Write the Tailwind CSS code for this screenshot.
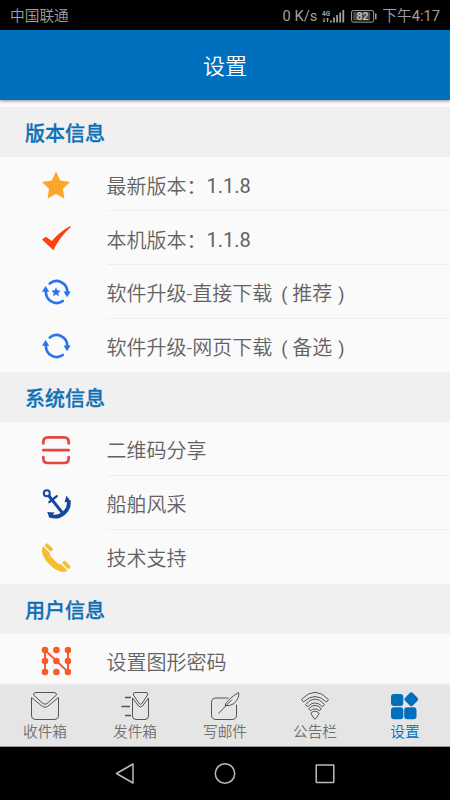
<!DOCTYPE html>
<html lang="zh-CN">
<head>
<meta charset="utf-8">
<meta name="viewport" content="width=device-width, initial-scale=1">
<title>设置</title>
<script src="https://cdn.jsdelivr.net/npm/@tailwindcss/browser@4"></script>
</head>
<body class="w-[450px] h-[800px] overflow-hidden flex flex-col bg-[#fafafa] font-['Roboto','Noto_Sans_CJK_SC',sans-serif] font-[350]">
<div class="h-[30px] shrink-0 bg-black text-[#a0a0a0] flex items-center justify-between pl-[10px] pr-[10px] text-[15px] leading-[30px] pt-[2px]">
  <span class="text-[14.7px]">中国联通</span>
  <div class="flex items-center">
    <span class="font-normal text-[14.7px] mr-[5px]">0 K/s</span>
    <svg class="mr-[6px]" width="23" height="15" viewBox="0 0 23 15" fill="#a0a0a0">
      <text x="0" y="6.500" font-size="7.500" font-weight="700" textLength="8" lengthAdjust="spacingAndGlyphs">4G</text>
      <path d="M2 9v4M1 11.500l1 1.500 1-1.500M5.500 13v-4M4.500 10.500l1-1.500 1 1.500" fill="none" stroke="#a0a0a0" stroke-width="1"/>
      <path d="M8 11.500h1.800v2H8zM11.100 8.500h1.800v5h-1.800zM14.200 6H16v7.500h-1.800zM17.300 3.500h1.800v10h-1.800zM20.400 1h1.800v12.500h-1.800z"/>
    </svg>
    <svg class="mr-[5px]" width="26" height="13" viewBox="0 0 26 13">
      <rect x=".6" y=".6" width="22" height="11.500" rx="1.500" fill="none" stroke="#a0a0a0"/>
      <rect x="2.200" y="2.200" width="17" height="8.300" fill="#4a4a4a"/>
      <rect x="24" y="3.500" width="1.500" height="6" fill="#a0a0a0"/>
      <text x="11.600" y="9.900" text-anchor="middle" font-size="10.500" font-weight="600" fill="#c4c4c4">82</text>
    </svg>
    <span class="text-[14.7px]">下午<span class="font-normal">4:17</span></span>
  </div>
</div>
<header class="h-[70px] shrink-0 bg-[#0070be] text-white text-[22px] flex items-center justify-center pt-[2px] relative shadow-[0_1px_3px_rgba(0,0,0,0.45)]">设置</header>
<main class="h-[585px] shrink-0 overflow-hidden pt-[7px] text-[20px] text-[#626262]">
  <h2 class="h-[50px] bg-[#f0f0f0] pl-[25px] pt-[4px] flex items-center font-medium text-[#0f70b5] text-[20px] [-webkit-text-stroke:0.3px_#0f70b5]">版本信息</h2>
  <div class="h-[54px] flex">
    <div class="w-[106.500px] flex items-center pl-[41px] pt-[4px]"><svg width="30" height="30" viewBox="0 0 30 30" fill="#faa629"><path d="M15 .5L19.200 9.600 29 11 21.900 17.800 23.400 27.500 15 23 6.600 27.500 8 17.800 1 11 10.800 9.600z"/></svg></div>
    <div class="flex-1 border-b border-[#eee] flex items-center pt-[6px]">最新版本：<span class="font-normal -mt-[2px]">1.1.8</span></div>
  </div>
  <div class="h-[54px] flex">
    <div class="w-[106.500px] flex items-center pl-[41px] pt-[4px]"><svg width="30" height="30" viewBox="0 0 30 30" fill="#fb4311"><path d="M1 14.500L5 11.800 10.800 16Q19 6.500 29.300 1l.4 1.300Q19 11.500 12.400 25.300z"/></svg></div>
    <div class="flex-1 border-b border-[#eee] flex items-center pt-[6px]">本机版本：<span class="font-normal -mt-[2px]">1.1.8</span></div>
  </div>
  <div class="h-[54px] flex">
    <div class="w-[106.500px] flex items-center pl-[41px]"><svg width="30" height="30" viewBox="0 0 30 30" fill="#2b73ee"><path d="M8.800 6.500A10.800 10.800 0 0 1 26.400 15M4.900 15A10.800 10.800 0 0 0 21.800 24" fill="none" stroke="#2b73ee" stroke-width="2.700" stroke-linecap="round"/><path d="M22.500 14.500h7.200l-3.600 5.800zM1 14.800h7.200L4.600 9zM15 10.400l1.400 2.900 3.200.5-2.300 2.200.6 3.200-2.900-1.600-2.900 1.600.6-3.200-2.300-2.200 3.200-.5z"/></svg></div>
    <div class="flex-1 border-b border-[#eee] flex items-center pt-[4px]"><span>软件升级-直接下载<span class="inline-block w-[20px] pl-[9px] text-[18px] font-normal leading-none">(</span>推荐<span class="inline-block w-[20px] pl-[6px] text-[18px] font-normal leading-none">)</span></span></div>
  </div>
  <div class="h-[53px] flex">
    <div class="w-[106.500px] flex items-center pl-[41px]"><svg width="30" height="30" viewBox="0 0 30 30" fill="#2b73ee"><path d="M8.800 6.500A10.800 10.800 0 0 1 26.400 15M4.900 15A10.800 10.800 0 0 0 21.800 24" fill="none" stroke="#2b73ee" stroke-width="2.700" stroke-linecap="round"/><path d="M22.500 14.500h7.200l-3.600 5.800zM1 14.800h7.200L4.600 9z"/></svg></div>
    <div class="flex-1 flex items-center pt-[5px]"><span>软件升级-网页下载<span class="inline-block w-[20px] pl-[9px] text-[18px] font-normal leading-none">(</span>备选<span class="inline-block w-[20px] pl-[6px] text-[18px] font-normal leading-none">)</span></span></div>
  </div>
  <h2 class="h-[50px] bg-[#f0f0f0] pl-[25px] pt-[4px] flex items-center font-medium text-[#0f70b5] text-[20px] [-webkit-text-stroke:0.3px_#0f70b5]">系统信息</h2>
  <div class="h-[54px] flex">
    <div class="w-[106.500px] flex items-center pl-[41px] pt-[2px]"><svg width="30" height="30" viewBox="0 0 30 30" fill="none" stroke="#e64640" stroke-width="2.700" stroke-linecap="round"><path d="M2.300 8.500V7Q2.300 2.300 7 2.300h16Q27.700 2.300 27.700 7v1.500M2.300 22v1.500Q2.300 28 7 28h16Q27.700 28 27.700 23.500V22M2.300 15.200h25.400"/></svg></div>
    <div class="flex-1 border-b border-[#eee] flex items-center pt-[5px]">二维码分享</div>
  </div>
  <div class="h-[54px] flex">
    <div class="w-[106.500px] flex items-center pl-[41px] pt-[2px]"><svg width="30" height="30" viewBox="0 0 30 30" fill="none" stroke="#16479e"><circle cx="5.800" cy="4.200" r="3" stroke-width="2"/><path d="M8 7l14 17.500" stroke-width="3"/><path d="M8.300 13.200l7.500-6" stroke-width="2.200" stroke-linecap="round"/><path d="M8.500 26.200Q16 29.800 22.500 24.500T27.600 11.500" stroke-width="3.800"/><path d="M6.200 23l7.500.5-5.200 5.500zM25.500 6.800l4.500 6-6.500.5z" fill="#16479e" stroke="none"/></svg></div>
    <div class="flex-1 border-b border-[#eee] flex items-center pt-[5px]">船舶风采</div>
  </div>
  <div class="h-[54px] flex">
    <div class="w-[106.500px] flex items-center pl-[41px] pt-[2px]"><svg width="30" height="30" viewBox="0 0 30 30" fill="#f5bd32"><path d="M1.600 3.800L2.500 3.600 8.800 9.900Q8.500 12 10.200 14L16 19.800Q18 21.500 20.200 21.200L26.400 27.400 25.500 28.300Q18 31 8.500 21.500-1 12 1.600 3.800z"/><rect x="3.200" y="2.500" width="9.200" height="3.700" rx="1.300" transform="rotate(45 7.800 4.300)"/><rect x="20.900" y="20" width="9.200" height="3.700" rx="1.300" transform="rotate(45 25.500 21.800)"/></svg></div>
    <div class="flex-1 flex items-center pt-[4px]">技术支持</div>
  </div>
  <h2 class="h-[50px] bg-[#f0f0f0] pl-[25px] pt-[3px] flex items-center font-medium text-[#0f70b5] text-[20px] [-webkit-text-stroke:0.3px_#0f70b5]">用户信息</h2>
  <div class="h-[54px] flex">
    <div class="w-[106.500px] flex items-center pl-[41px]"><svg width="30" height="30" viewBox="0 0 30 30" fill="#fa5a2a"><path d="M4 26V4l23 22V4" fill="none" stroke="#fa5a2a" stroke-width="2"/><circle cx="4" cy="4" r="3.300"/><circle cx="15.400" cy="4" r="3.300"/><circle cx="27" cy="4" r="3.300"/><circle cx="4" cy="15" r="3.300"/><circle cx="15.400" cy="15" r="3.300"/><circle cx="27" cy="15" r="3.300"/><circle cx="4" cy="26" r="3.300"/><circle cx="15.400" cy="26" r="3.300"/><circle cx="27" cy="26" r="3.300"/></svg></div>
    <div class="flex-1 flex items-center pt-[4px]">设置图形密码</div>
  </div>
</main>
<nav class="h-[62px] shrink-0 bg-[#e5e5e5] border-b border-[#999] grid grid-cols-5 text-[14.7px] leading-[20px] text-[#707070] relative shadow-[0_-1px_2px_rgba(0,0,0,0.08)]">
  <div class="flex flex-col items-center pt-[6px]"><svg width="30" height="30" viewBox="0 0 30 30" fill="none" stroke="#555"><path d="M1.500 6.500V24Q1.500 28.500 6 28.500H24Q28.500 28.500 28.500 24V6.500L17.500 15.500Q15 17 12.500 15.500zM3.500 4Q3.500 1.500 6 1.500H24Q26.500 1.500 26.500 4L17 12.500Q15 14 13 12.500z"/></svg><span class="mt-[1px]">收件箱</span></div>
  <div class="flex flex-col items-center pt-[6px]"><svg width="30" height="30" viewBox="0 0 30 30" fill="none" stroke="#555"><path d="M12.500 7V25Q12.500 28.500 16 28.500H25Q28.500 28.500 28.500 25V7L22.500 15Q20.500 17 18.500 15zM13.500 4Q12.500 1.500 15 1.500H26Q28.500 1.500 27.500 4L22 12.500Q20.500 14 19 12.500z"/><path d="M5 6.500h6M1.500 15.500H10M5 24.500h6" stroke-width="1.400"/></svg><span class="mt-[1px]">发件箱</span></div>
  <div class="flex flex-col items-center pt-[6px]"><svg width="30" height="30" viewBox="0 0 30 30" fill="none" stroke="#555"><path d="M18.500 7H6Q1.500 7 1.500 11.500V24Q1.500 28.500 6 28.500H22Q26.500 28.500 26.500 24V13.500M8.500 22.500L22 8.500M15 14.500Q17 8.500 28.500 1.500 30 6.500 24 12.500 20 15.500 15 14.500z"/></svg><span class="mt-[1px]">写邮件</span></div>
  <div class="flex flex-col items-center pt-[6px]"><svg width="30" height="30" viewBox="0 0 30 30" fill="none" stroke="#555" stroke-linejoin="round"><path d="M1.500 8.500Q15-6 28.500 8.500L26.500 11Q15 0 3.500 11zM5.500 13.500Q15 2.500 24.500 13.500L22.500 15.800Q15 8 7.500 15.800zM8.700 17.700Q15 11 21.300 17.700L19.500 19.700Q15 16 10.500 19.700zM10.800 22.300Q15 18 19.200 22.300L16 27.500Q15 28.700 14 27.500z"/></svg><span class="mt-[1px]">公告栏</span></div>
  <div class="flex flex-col items-center pt-[6px] text-[#0070be]"><svg width="30" height="30" viewBox="0 0 30 30" fill="#0070be"><rect x="1" y="3" width="12.300" height="12" rx="3"/><rect x="1" y="16.300" width="12.300" height="12" rx="3"/><rect x="14.200" y="16.300" width="12.300" height="12" rx="3"/><rect x="15.800" y="2.800" width="11" height="11" rx="2.200" transform="rotate(45 21.300 8.300)"/></svg><span class="mt-[1px]">设置</span></div>
</nav>
<div class="h-[53px] shrink-0 bg-black flex items-center justify-center gap-[76px]">
  <svg width="24" height="24" viewBox="0 0 24 24" fill="none" stroke="#bbb" stroke-width="1.500" stroke-linejoin="round"><path d="M3.500 11.500L20 2v19z"/></svg>
  <svg width="24" height="24" viewBox="0 0 24 24" fill="none" stroke="#bbb" stroke-width="1.500"><circle cx="12" cy="11.500" r="9.700"/></svg>
  <svg width="24" height="24" viewBox="0 0 24 24" fill="none" stroke="#bbb" stroke-width="1.500"><rect x="3.200" y="2.900" width="17.600" height="17.600" rx=".5"/></svg>
</div>
</body>
</html>
